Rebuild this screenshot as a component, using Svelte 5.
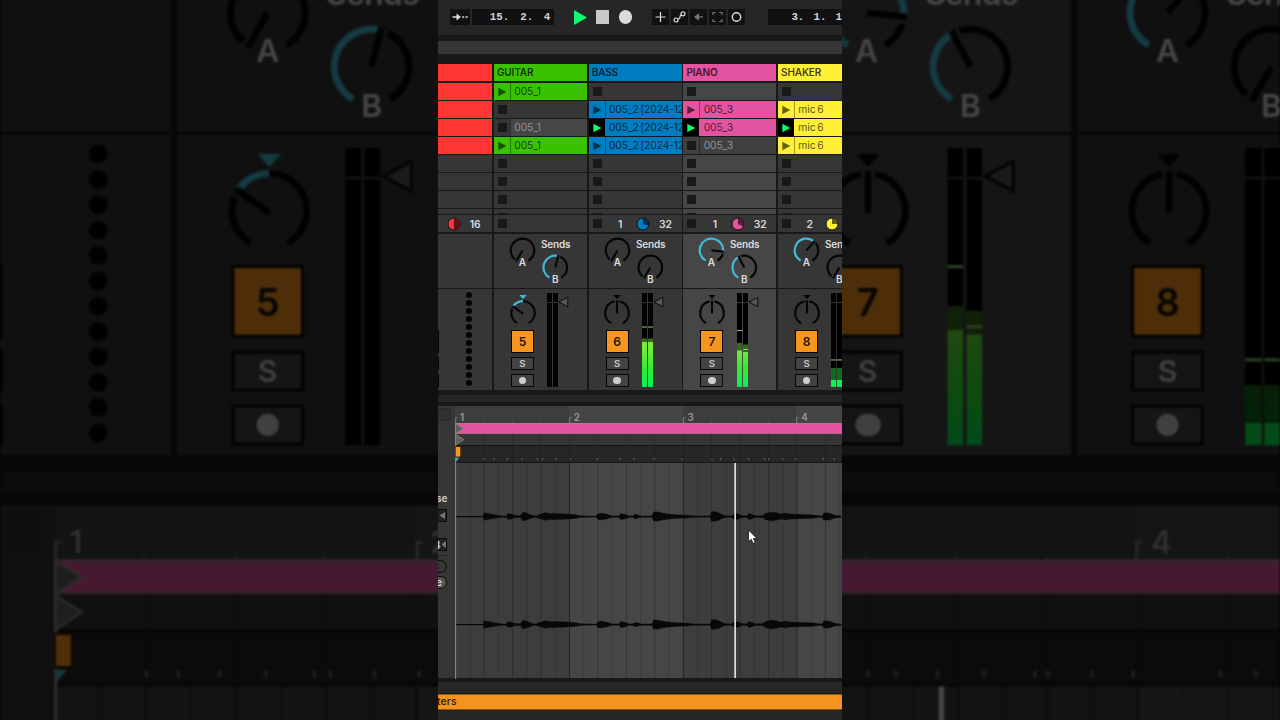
<script>
  const tracks = [
    { name: '', color: '#ff3633', group: true, num: '4', count: '', length: '16', pie: 0.5,
      clips: ['on', 'on', 'on', 'on', '', '', ''], label: '' },
    { name: 'GUITAR', color: '#3ac200', num: '5', pan: -57, a: -150, b: 14,
      clips: ['on', 'empty', 'off', 'on', 'empty', 'empty', 'empty'], label: '005_1',
      meters: [{ }, { }] },
    { name: 'BASS', color: '#007dc0', num: '6', pan: 0, a: -150, b: -150, count: '1', length: '32', pie: 0.3,
      clips: ['empty', 'on', 'play', 'on', 'empty', 'empty', 'empty'], label: '005_2 [2024-12',
      meters: [{ peak: 34, dim: 45.5, lit: 49 }, { peak: 34, dim: 45.5, lit: 49 }] },
    { name: 'PIANO', color: '#e4539f', num: '7', pan: 0, a: 96, b: -28, count: '1', length: '32', pie: 0.32, selected: true,
      clips: ['empty', 'on', 'play', 'off', 'empty', 'empty', 'empty'], label: '005_3',
      meters: [{ peak: 37.5, dim: 50, lit: 57.5 }, { peak: 56.5, dim: 51.5, lit: 59 }] },
    { name: 'SHAKER', color: '#fff035', num: '8', pan: 0, a: 40, b: -150, count: '2', length: '32', pie: 0.25,
      clips: ['empty', 'on', 'play', 'on', 'empty', 'empty', 'empty'], label: 'mic 6',
      meters: [{ peak: 67, dim: 75, lit: 87 }, { peak: 67, dim: 75, lit: 87 }] }
  ];

  const point = (cx, cy, r, deg) => {
    const t = (deg * Math.PI) / 180;
    return [(cx + r * Math.sin(t)).toFixed(2), (cy - r * Math.cos(t)).toFixed(2)];
  };
  const arc = (cx, cy, from, to, r = 11.8) => {
    const [x1, y1] = point(cx, cy, r, from);
    const [x2, y2] = point(cx, cy, r, to);
    return `M${x1} ${y1}A${r} ${r} 0 ${to - from > 180 ? 1 : 0} 1 ${x2} ${y2}`;
  };
  const pie = (part) => {
    const [x, y] = point(7, 7, 5.6, part * 360);
    return `M7 7V1.4A5.6 5.6 0 ${part > 0.5 ? 1 : 0} 1 ${x} ${y}Z`;
  };

  const bars = [0, 1, 2, 3];
  const barWidth = 113.8;
  const grid = Array.from({ length: 28 }, (_, i) => i);
  const transients = [46.3, 56.3, 69.3, 84, 99.3, 104.3, 118.3, 132.3, 159.3, 181.7, 196, 216, 244, 274,
    282.7, 296, 310.7, 326.7, 330.7, 344.7, 357.7, 385.3, 396.3].map((x) => x - 17);

  const envelope = [[17, 0], [45, 0], [45.5, 3.8], [48, 3.6], [53, 2.4], [58, 1.4], [64, 0.3], [68.5, 0.3], [69.5, 2.8],
    [73, 2.6], [77, 0.8], [82.5, 0.6], [84, 3.6], [86, 4.8], [89, 3.4], [95, 0.6], [98, 0.4], [101, 1.8], [104, 2.6], [106, 4],
    [111, 3.2], [122, 2.9], [130, 2.4], [138, 1.7], [142, 0.6], [158, 0], [160, 3], [164, 3.5], [169, 2.2], [174, 0.3],
    [181, 0.3], [182.5, 3.1], [186, 2.6], [191, 0.4], [195, 0.3], [197, 2.3], [203, 0.4], [214, 0.2], [215.5, 5.2],
    [220, 4.9], [226, 3.3], [236, 1.8], [247, 1.3], [257, 0.3], [272, 0.2], [273.5, 5.2], [276, 5.5], [281, 3.8],
    [287, 0.5], [294, 0.4], [296, 2.9], [299, 3], [304, 0.6], [309, 0.6], [311, 3.2], [317, 0.6], [325, 0.7],
    [327, 3], [332, 4.6], [337, 4.3], [343, 2.4], [347, 3.6], [352, 2.5], [362, 2], [372, 1.8], [382, 0.5], [384, 0.3],
    [386, 4], [391, 3.6], [398, 0.9], [404, 0.3]];
  const level = (x) => {
    for (let i = 1; i < envelope.length; i++) {
      const [x0, v0] = envelope[i - 1];
      const [x1, v1] = envelope[i];
      if (x <= x1) return v0 + ((v1 - v0) * (x - x0)) / (x1 - x0);
    }
    return 0;
  };
  const wave = (cy) => {
    const top = [];
    const bottom = [];
    for (let x = 17; x <= 404; x += 0.7) {
      const v = level(x);
      const up = 0.6 + v * (0.86 + 0.14 * Math.sin(x * 2.9));
      const down = 0.6 + v * (0.8 + 0.14 * Math.cos(x * 2.3));
      top.push(`${(x - 17).toFixed(1)},${(cy - up).toFixed(2)}`);
      bottom.unshift(`${(x - 17).toFixed(1)},${(cy + down).toFixed(2)}`);
    }
    return [...top, ...bottom].join(' ');
  };
  const waves = [wave(53.6), wave(161.6)];
</script>

{#snippet knob(cx, cy, value)}
  {#if value > -150}
    <path d={arc(cx, cy, -150, value)} fill="none" stroke="#43bad5" stroke-width="2.2" />
  {/if}
  <path d={arc(cx, cy, value + 11, 150)} fill="none" stroke="#060606" stroke-width="2.2" />
  <line x1={cx} y1={cy} x2={point(cx, cy, 12.8, value)[0]} y2={point(cx, cy, 12.8, value)[1]} stroke="#060606" stroke-width="2.1" />
{/snippet}

{#snippet screen()}
  <div class="frame">
    <div class="toolbar">
      <div class="box follow">
        <svg width="20" height="16" viewBox="0 0 20 16"><path d="M2.5 8h5M12.2 8h2M15.6 8h2" stroke="#ddd" stroke-width="1.3" /><path d="M6.5 4.5L11 8L6.5 11.5Z" fill="#ddd" /></svg>
      </div>
      <div class="box position"><span>15.</span><span>2.</span><span>4</span></div>
      <div class="transport">
        <svg width="13" height="15" viewBox="0 0 13 15"><path d="M0 0L13 7.5L0 15Z" fill="#0cfb70" /></svg>
        <i class="halt"></i>
        <i class="rec"></i>
      </div>
      <div class="tools">
        <svg class="box" width="17" height="16" viewBox="0 0 17 16"><path d="M8.5 3v10M3.5 8h10" stroke="#ddd" stroke-width="1.2" /></svg>
        <svg class="box" width="17" height="16" viewBox="0 0 17 16" fill="none" stroke="#ddd" stroke-width="1.2"><circle cx="5" cy="11" r="2" /><circle cx="12" cy="4.8" r="2" /><path d="M6.7 9.8Q9 10 9 8T10.4 6.1" /></svg>
        <svg class="box" width="17" height="16" viewBox="0 0 17 16"><path d="M8 8h5" stroke="#777" stroke-width="1.3" /><path d="M9 4.3V11.7L4 8Z" fill="#777" /></svg>
        <svg class="box" width="17" height="16" viewBox="0 0 17 16"><path d="M4 6V3.5h2.7M10.3 3.5H13V6M13 10v2.5h-2.7M6.7 12.5H4V10" fill="none" stroke="#777" stroke-width="1.2" /></svg>
        <svg class="box" width="17" height="16" viewBox="0 0 17 16"><circle cx="8.5" cy="8" r="4.2" fill="none" stroke="#ddd" stroke-width="1.4" /></svg>
      </div>
      <div class="box loop"><span>3.</span><span>1.</span><span>1</span></div>
    </div>
    <div class="overview"></div>

    <div class="session">
      {#each tracks as t}
        <div class="track" class:selected={t.selected} class:group={t.group} style="--c: {t.color}">
          <div class="name">{t.name}</div>
          <div class="slots">
            {#each t.clips as c}
              <div class="slot {c}">
                {#if c === 'on' || c === 'play'}
                  <span class="launch">
                    {#if !t.group}<svg width="9" height="10" viewBox="0 0 9 10"><path d="M.3 .7L8.3 5L.3 9.3Z" fill={c === 'play' ? '#0cfb70' : 'rgba(0,0,0,.6)'} /></svg>{/if}
                  </span>
                  <span class="clip">{t.label}</span>
                {:else if c}
                  <span class="launch"><i></i></span>
                  {#if c === 'off'}<span class="clip">{t.label}</span>{/if}
                {/if}
              </div>
            {/each}
            <div class="slot cut">{#if !t.group}<span class="launch"><i></i></span>{/if}</div>
          </div>
          <div class="status">
            <span class="sq">{#if !t.group}<i></i>{/if}</span>
            <span class="count">{t.count ?? ''}</span>
            {#if t.length}
              <svg width="14" height="14" viewBox="0 0 14 14">
                <circle cx="7" cy="7" r="6" fill={t.color} stroke="#101010" stroke-width="1" />
                <path d={pie(t.pie)} fill="rgba(0,0,0,.62)" />
              </svg>
              <span class="length">{t.length}</span>
            {/if}
          </div>
          <div class="sends">
            {#if !t.group}
              <svg width="93" height="54" viewBox="0 0 93 54">
                {@render knob(28.5, 16.4, t.a)}
                {@render knob(61.3, 33.4, t.b)}
                <text x="28.5" y="32" text-anchor="middle" class="lab">A</text>
                <text x="61.3" y="49.2" text-anchor="middle" class="lab">B</text>
                <text x="61.7" y="13.8" text-anchor="middle" class="lab" textLength="29.4">Sends</text>
              </svg>
            {/if}
          </div>
          <div class="mixer">
            <div class="controls">
              <svg width="30" height="36" viewBox="0 0 30 36">
                {#if !t.group}
                  <path d="M11.3 1H18.7L15 5.2Z" fill={t.pan ? '#43bad5' : '#060606'} />
                  {#if t.pan}
                    <path d={arc(15, 18.9, t.pan, 0)} fill="none" stroke="#43bad5" stroke-width="2.2" />
                    <path d={arc(15, 18.9, 0, 150)} fill="none" stroke="#060606" stroke-width="2.2" />
                    <path d={arc(15, 18.9, -150, t.pan - 11)} fill="none" stroke="#060606" stroke-width="2.2" />
                  {:else}
                    <path d={arc(15, 18.9, 11, 150)} fill="none" stroke="#060606" stroke-width="2.2" />
                    <path d={arc(15, 18.9, -150, -11)} fill="none" stroke="#060606" stroke-width="2.2" />
                  {/if}
                  <line x1="15" y1="19.6" x2={point(15, 18.9, 12.6, t.pan)[0]} y2={point(15, 18.9, 12.6, t.pan)[1]} stroke="#060606" stroke-width="2.1" />
                {/if}
              </svg>
              <span class="num">{t.num}</span>
              <span class="btn solo">S</span>
              <span class="btn arm">{#if !t.group}<i></i>{/if}</span>
            </div>
            {#if t.group}
              <div class="dots">{#each Array(12) as _}<i></i>{/each}</div>
            {:else}
              <div class="meters">
                {#each t.meters as m}
                  <svg width="5.2" height="94" viewBox="0 0 5.2 94">
                    <defs>
                      <linearGradient id="lvl{t.num}" x1="0" y1="45" x2="0" y2="94" gradientUnits="userSpaceOnUse">
                        <stop offset="0" stop-color="#86ee35" /><stop offset=".3" stop-color="#68ea38" />
                        <stop offset=".65" stop-color="#30ec32" /><stop offset="1" stop-color="#08f058" />
                      </linearGradient>
                    </defs>
                    <rect width="5.2" height="94" fill="#000" />
                    <rect y="9" width="5.2" height="1" fill="#383838" />
                    {#if m.lit}
                      <rect y={m.dim} width="5.2" height={94 - m.dim} fill="url(#lvl{t.num})" opacity=".45" />
                      <rect y={m.lit} width="5.2" height={94 - m.lit} fill="url(#lvl{t.num})" />
                      <rect y={m.peak - 0.5} width="5.2" height="1" fill="#8fd078" />
                    {/if}
                  </svg>
                {/each}
              </div>
              <svg class="fader" width="11" height="12" viewBox="0 0 11 12"><path d="M1 6L9.8 1.3V10.7Z" fill="#565656" stroke="#0c0c0c" stroke-width="1" /></svg>
            {/if}
          </div>
        </div>
      {/each}
    </div>
    <div class="split"></div>

    <div class="detail">
      <div class="side">
        <div class="tab"></div>
        <div class="se">se</div>
        <div class="field f1"><svg width="9" height="13" viewBox="0 0 9 13"><path d="M7 3V10L1.5 6.5Z" fill="#777" /></svg></div>
        <div class="field f2"><span>4</span><svg width="6" height="13" viewBox="0 0 6 13"><path d="M5 3V10L.5 6.5Z" fill="#777" /></svg></div>
        <div class="rule"></div>
        <div class="pill"></div>
        <div class="pill grey">e</div>
      </div>
      <div class="editor">
        <div class="ruler">
          {#each bars as b}
            <div class="bar" class:odd={b % 2}>
              <svg width="4" height="6" viewBox="0 0 4 6"><path d="M.6 6V.6H2.4" fill="none" stroke="#7a7a7a" /></svg>
              <span>{b + 1}</span><i></i><i></i><i></i>
            </div>
          {/each}
        </div>
        <div class="loopbar"></div>
        <div class="startrow"></div>
        <div class="warp">
          <svg width="387" height="16" viewBox="0 0 387 16">
            {#each transients as x}<rect x={x - 0.6} y="12" width="1.1" height="2.2" fill="#606060" />{/each}
          </svg>
        </div>
        <svg class="wave" width="387" height="215" viewBox="0 0 387 215">
          {#each bars as b}<rect x={b * barWidth + 0.5} width={barWidth} height="215" fill={b % 2 ? '#464646' : '#3d3d3d'} />{/each}
          {#each grid as g}
            <rect x={g * 14.225 + 0.2} width="1" height="215" fill="#000" opacity={g % 8 === 0 ? 0.38 : g % 2 ? 0.13 : 0.24} />
          {/each}
          {#each waves as w}<polygon points={w} fill="#080808" />{/each}
          <rect x="279.3" width="1.7" height="215" fill="#dedede" />
        </svg>
        <svg class="markers" width="12" height="256" viewBox="0 0 12 256">
          <path d="M.6 0V256" stroke="#8b8b8b" stroke-width="1.1" />
          <path d="M.6 .6L8.8 5.6L.6 10.8ZM.6 11.4L8.8 16.6L.6 22Z" fill="#606060" stroke="#8b8b8b" stroke-width=".8" />
          <rect x=".2" y="23.4" width="5.6" height="10.6" fill="#f7991f" stroke="#301800" stroke-width=".8" />
          <path d="M.8 34.8H4.2L.8 38.8Z" fill="#3fb4b4" />
        </svg>
      </div>
    </div>
    <div class="gutter"></div>
    <div class="footer">ters</div>
    <svg class="cursor" width="12" height="17" viewBox="0 0 12 17"><path d="M1.5 1V12.8L4.3 10.3L6.1 14.5L8.2 13.6L6.4 9.5H9.9Z" fill="#fff" stroke="#111" stroke-width=".8" /></svg>
  </div>
{/snippet}

<main>
  <div class="backdrop" aria-hidden="true">{@render screen()}</div>
  {@render screen()}
</main>

<style>
  :global(body) { margin: 0; background: #000; overflow: hidden; }
  main { width: 1280px; height: 720px; display: flex; justify-content: center; position: relative; overflow: hidden; background: #000; font-family: Inter, "Liberation Sans", sans-serif; }
  .backdrop { position: absolute; inset: 0; display: flex; justify-content: center; opacity: .31; transform: scale(3.1683); filter: blur(.3px); }
  .frame { position: relative; width: 404px; height: 720px; overflow: hidden; display: flex; flex-direction: column; background: #181818; flex: none; }
  i { display: block; font-style: normal; }

  .toolbar { height: 35px; flex: none; background: #262626; display: flex; align-items: center; padding: 0 0 1px 11.7px; box-sizing: border-box; white-space: nowrap; }
  .box { background: #111; height: 16px; flex: none; }
  .follow { width: 20px; }
  .position, .loop { display: flex; align-items: center; font: 700 10.8px/16px "Liberation Mono", monospace; color: #d4d4d4; }
  .position { width: 82px; margin-left: 2px; }
  .position span { width: 26px; }
  .position span:first-child { margin-left: 18px; width: 30.5px; }
  .position span:last-child { width: 7px; margin-left: -2.5px; }
  .transport { display: flex; align-items: center; margin-left: 20px; gap: 9.3px; }
  .halt { width: 13.5px; height: 13.5px; background: #c9c9c9; }
  .rec { width: 13.5px; height: 13.5px; border-radius: 50%; background: #dcdcdc; }
  .tools { display: flex; gap: 2px; margin-left: 19.8px; }
  .loop { margin-left: 22.5px; width: 90px; }
  .loop span { width: 24px; }
  .loop span:first-child { margin-left: 23.8px; }
  .overview { flex: none; height: 13px; margin: 6px 0 10px; background: #363636; }

  .session { flex: none; display: flex; gap: 1.7px; margin-left: -38.7px; height: 326px; }
  .track { width: 93px; flex: none; display: flex; flex-direction: column; --bg: #363636; }
  .track.selected { --bg: #464646; }
  .name { height: 17px; flex: none; background: var(--c); font-size: 10px; font-weight: 600; line-height: 17px; padding-left: 3px; color: rgba(0, 0, 0, .75); letter-spacing: -.12px; }
  .slots { margin-top: 2px; height: 131px; flex: none; display: flex; flex-direction: column; gap: 1px; overflow: hidden; }
  .slot { height: 17px; flex: none; background: var(--bg); display: flex; overflow: hidden; }
  .slot.cut { height: 5px; }
  .launch { width: 16px; flex: none; display: flex; align-items: center; padding-left: 4px; box-sizing: border-box; height: 17px; }
  .launch i, .sq i { width: 9px; height: 9px; background: #191919; }
  .clip { flex: 1; min-width: 0; white-space: nowrap; overflow: hidden; font-size: 10.3px; line-height: 17.5px; padding-left: 3.3px; border-left: 1px solid rgba(0, 0, 0, .35); color: rgba(0, 0, 0, .7); word-spacing: -.9px; letter-spacing: -.12px; }
  .on, .play { background: var(--c); }
  .play .launch { background: #000; }
  .play .clip { border-color: transparent; }
  .off .clip { background: #464646; color: #929292; }
  .selected .off, .selected .off .clip { background: #404040; }
  .group .clip { border: 0; }
  .status { height: 17px; flex: none; margin: 1px 0 2px; background: #363636; display: flex; align-items: center; font-size: 10.3px; font-weight: 600; color: #dcdcdc; }
  .sq { width: 17px; padding-left: 4px; box-sizing: border-box; flex: none; }
  .count { width: 30.2px; text-align: center; flex: none; text-indent: -1px; }
  .length { margin-left: 9.2px; }
  .sends { height: 53.5px; flex: none; background: var(--bg); overflow: hidden; }
  svg { display: block; flex: none; }
  .lab { font-size: 10px; font-weight: 600; fill: #dcdcdc; }
  .mixer { height: 101px; flex: none; margin-top: 1.5px; background: var(--bg); display: flex; align-items: flex-start; box-sizing: border-box; padding-left: 13.5px; }
  .controls { width: 30px; display: flex; flex-direction: column; align-items: center; flex: none; padding-top: 5px; }
  .num { box-sizing: border-box; width: 22.8px; height: 23px; border: 1px solid #0c0600; background: #f7951f; color: #1c1205; font-size: 12px; font-weight: 600; line-height: 21.5px; text-align: center; }
  .btn { box-sizing: border-box; width: 22.8px; height: 13px; border: 1px solid #080808; background: #444; color: #c8c8c8; font-size: 9.6px; font-weight: 600; text-align: center; display: flex; align-items: center; justify-content: center; }
  .solo { margin-top: 4px; }
  .arm { margin-top: 4px; }
  .arm i { width: 7.4px; height: 7.4px; border-radius: 50%; background: #cdcdcd; }
  .meters { margin: 4px 0 0 9.8px; display: flex; gap: .8px; }
  .fader { margin: 7.2px 0 0 -.2px; }
  .dots { margin: 3px 0 0 23.4px; display: flex; flex-direction: column; gap: 2px; }
  .dots i { width: 6px; height: 6px; border-radius: 50%; background: #050505; }

  .split { flex: none; height: 7px; margin: 5px 0 4px; background: #252525; }
  .detail { display: flex; height: 272px; flex: none; }
  .side { width: 17px; flex: none; background: #363636; display: flex; flex-direction: column; align-items: flex-start; font-size: 10px; font-weight: 600; color: #d4d4d4; }
  .tab { width: 13px; height: 13px; margin-top: 2px; background: #303030; border: 1px solid #2a2a2a; border-left: 0; border-radius: 0 4px 4px 0; box-sizing: border-box; }
  .se { margin-top: 71px; line-height: 12px; margin-left: -2px; }
  .field { height: 13px; width: 9px; box-sizing: border-box; border: 1px solid #0a0a0a; border-left: 0; background: #232323; display: flex; align-items: center; }
  .f1 { margin-top: 5px; }
  .f2 { margin-top: 16px; overflow: hidden; }
  .f2 span { margin-left: -4px; }
  .rule { width: 9px; height: 1px; background: #242424; margin-top: 4px; }
  .pill { box-sizing: border-box; width: 9px; height: 13px; border: 1px solid #0a0a0a; border-left: 0; border-radius: 0 7px 7px 0; margin-top: 4px; line-height: 10px; }
  .pill.grey { background: #555; margin-top: 3px; text-indent: -2px; }
  .editor { width: 387px; position: relative; display: flex; flex-direction: column; }
  .ruler { display: flex; height: 17px; overflow: hidden; flex: none; background: #3d3d3d; }
  .bar { box-sizing: border-box; width: 113.8px; flex: none; display: grid; grid-template-columns: 4px 24.4px repeat(3, 28.45px); align-items: end; background: #3d3d3d; font-size: 9.8px; font-weight: 600; color: #999; }
  .bar.odd { background: #454545; }
  .bar span { line-height: 10px; padding-left: .9px; align-self: end; }
  .bar i { width: 1px; height: 1.4px; background: #666; }
  .loopbar { height: 11px; flex: none; box-sizing: border-box; background: #e4539f; border-top: 1px solid #ad7b96; border-bottom: 1px solid #a56d89; }
  .startrow { height: 11px; flex: none; background: repeating-linear-gradient(90deg, #2e2e2e 0 1px, #353535 1px 28.45px); border-bottom: 1px solid #151515; }
  .warp { height: 16px; flex: none; border-bottom: 1px solid #171717; background: repeating-linear-gradient(90deg, #202020 0 1px, #262626 1px 28.45px); }
  .markers { position: absolute; left: 0; top: 17px; }
  .gutter { height: 11px; margin: 4px 0 1px; background: #262626; flex: none; }
  .footer { height: 26px; flex: none; background: linear-gradient(#8a5a20 0 1px, #f4931e 1px 15px, #8a5312 15px 16px, #202020 16px 17px, #262626 17px); font-size: 10.3px; line-height: 14px; font-weight: 500; color: #2c1903; letter-spacing: .2px; text-indent: -1px; }
  .cursor { position: absolute; left: 308.7px; top: 528.5px; }
</style>
